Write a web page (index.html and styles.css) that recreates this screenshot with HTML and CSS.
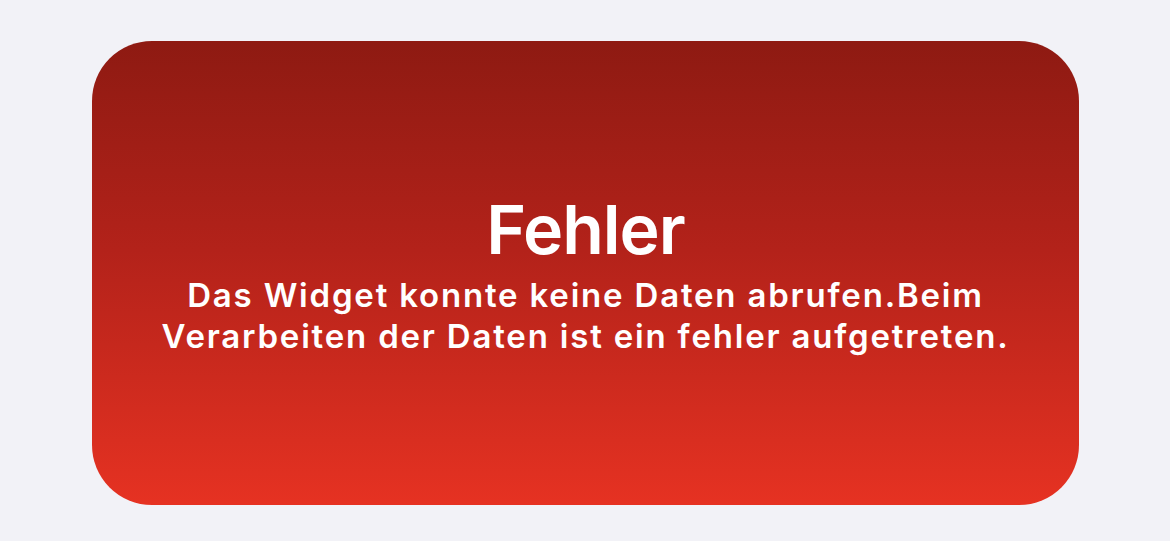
FILE: index.html
```html
<!DOCTYPE html>
<html lang="de">
<head>
<meta charset="utf-8">
<link rel="stylesheet" href="styles.css">
</head>
<body>
<div class="card">
  <h1 class="title">Fehler</h1>
  <p class="message">Das Widget konnte keine Daten abrufen.Beim<br>Verarbeiten der Daten ist ein fehler aufgetreten.</p>
</div>
</body>
</html>
```
FILE: styles.css
```css
html, body {
  margin: 0;
  height: 100%;
}
body {
  background: #f2f2f7;
  box-sizing: border-box;
  padding: 41px 91px 36px 92px;
  font-family: Inter, "Open Sans", sans-serif;
}
.card {
  height: 100%;
  border-radius: 60px;
  background: linear-gradient(180deg, #8e1a12 0%, #b3221a 45%, #e63222 100%);
  display: flex;
  flex-direction: column;
  align-items: center;
  justify-content: center;
  color: #fff;
  text-align: center;
}
.title {
  margin: 0 0 6px;
  font-size: 68px;
  font-weight: 600;
  line-height: 80px;
  letter-spacing: -1px;
}
.message {
  margin: 0;
  font-size: 33px;
  font-weight: 600;
  line-height: 41px;
  letter-spacing: 1.8px;
}
```
